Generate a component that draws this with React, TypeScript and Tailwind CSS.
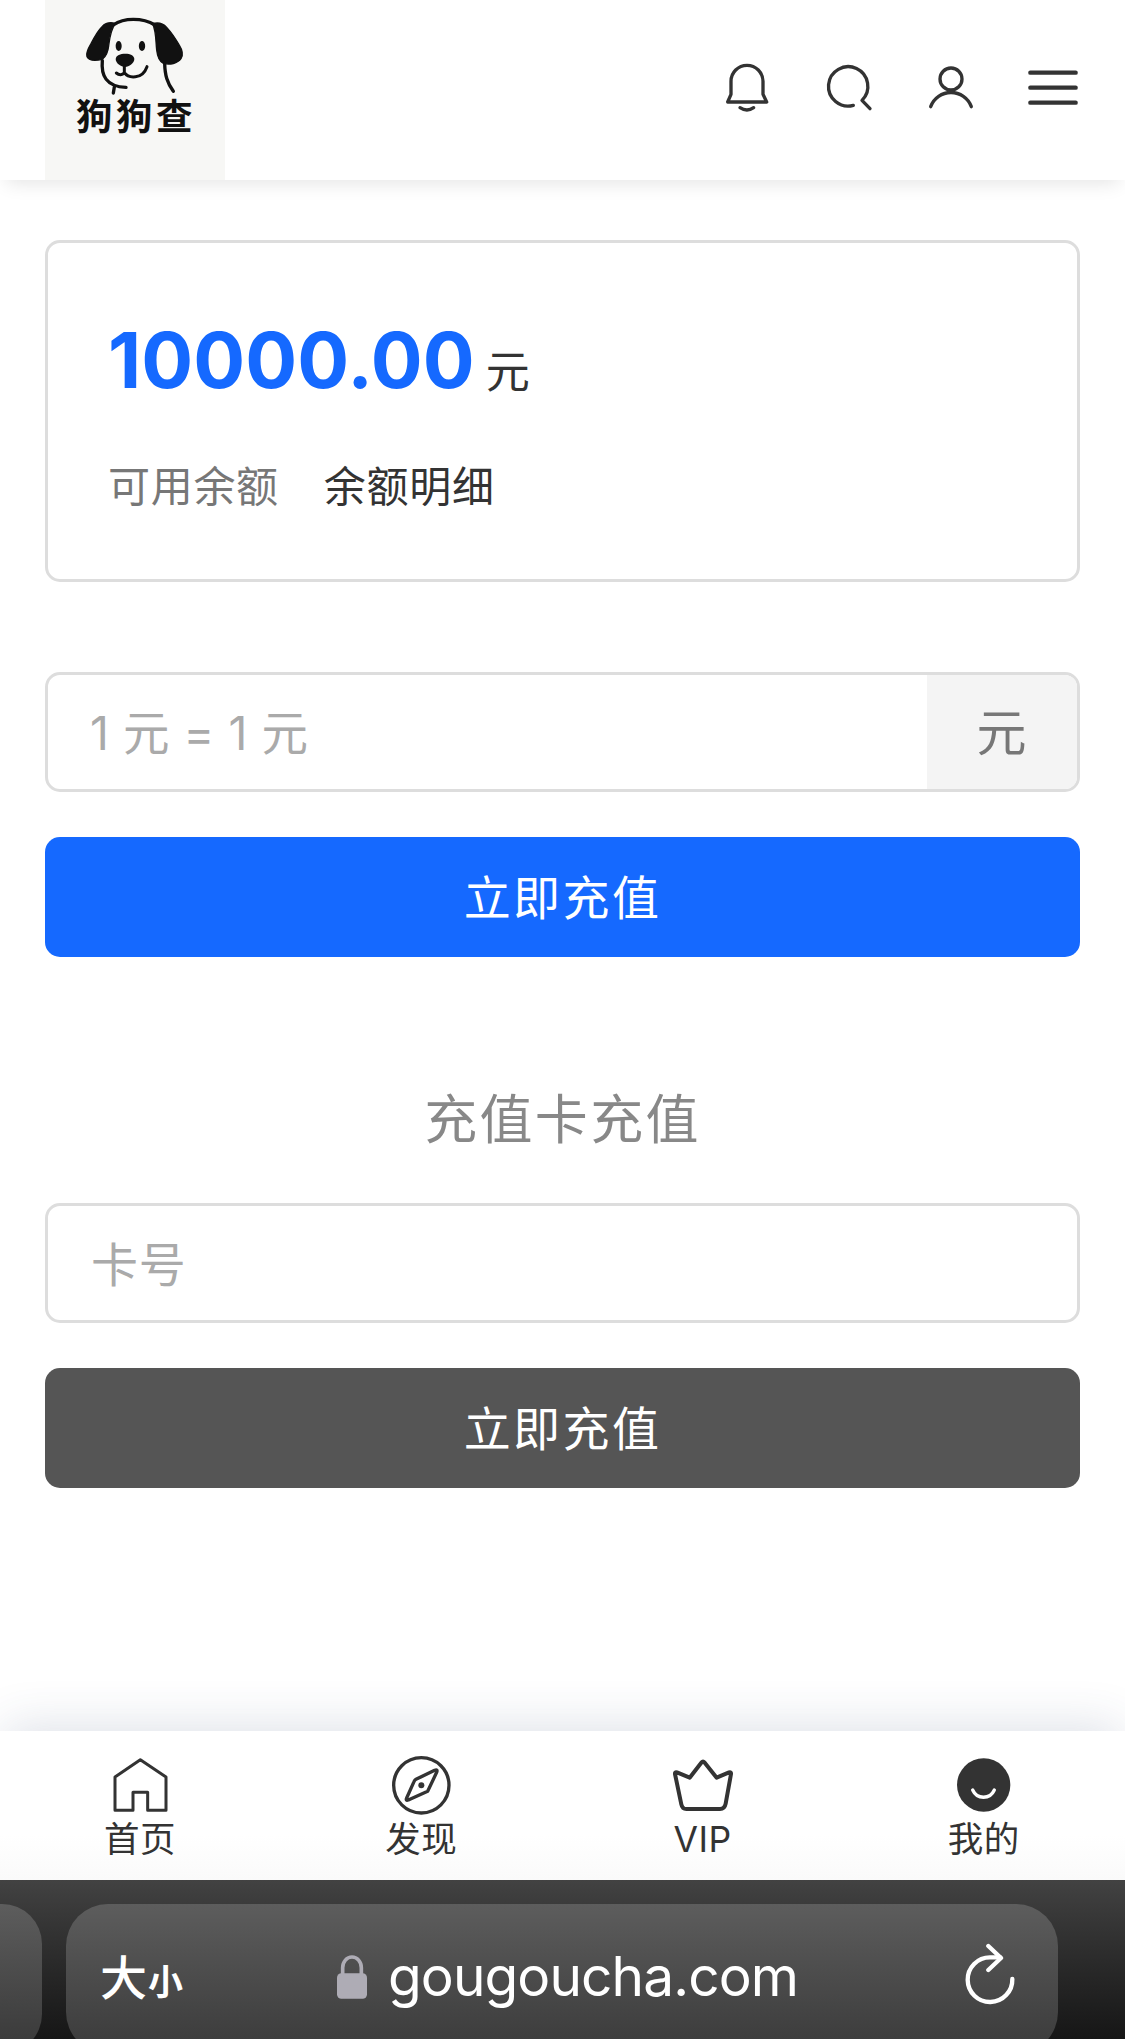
import { useState } from "react";
import type { ReactNode } from "react";

function Icon({ width = 10, children }: { width?: number; children: ReactNode }) {
  return (
    <svg
      viewBox="0 0 180 180"
      className="block h-[60px] w-[60px] overflow-visible"
      fill="none"
      stroke="currentColor"
      strokeWidth={width}
      strokeLinecap="round"
      strokeLinejoin="round"
    >
      {children}
    </svg>
  );
}

function Logo() {
  return (
    <a className="block h-[180px] w-[180px] bg-[#f7f7f5] text-[#111]">
      <svg
        viewBox="0 0 540 288"
        className="block h-24 w-[180px]"
        fill="none"
        stroke="currentColor"
        strokeWidth="10"
        strokeLinecap="round"
        strokeLinejoin="round"
      >
        <path d="M205 75C222 63 240 58 265 58S312 64 330 75" />
        <path
          d="M211 70C196 66 182 68 171 80C158 93 148 111 138 131C128 148 122 160 126 170C132 182 150 183 172 178C184 169 189 156 191 138C194 114 196 91 211 70Z"
          fill="currentColor"
          strokeWidth="4"
        />
        <path
          d="M323 71C342 66 354 70 365 82C378 96 391 115 402 134C412 150 416 164 408 176C398 190 374 196 355 190C342 184 337 168 335 150C332 124 334 96 323 71Z"
          fill="currentColor"
          strokeWidth="4"
        />
        <ellipse cx="221" cy="138" rx="9" ry="15" fill="currentColor" stroke="none" />
        <ellipse cx="291" cy="138" rx="9.5" ry="15" fill="currentColor" stroke="none" />
        <path
          d="M212 177C213 165 226 161 241 161S267 166 268 177C268 189 252 201 240 201S212 190 212 177Z"
          fill="currentColor"
          stroke="none"
        />
        <path d="M238 198V218M214 219C222 226 232 226 238 218C250 235 292 240 306 200" strokeWidth="9" />
        <path d="M172 182C168 225 182 260 243 262M208 261L205 279M359 190C360 226 366 247 385 274" />
      </svg>
      <div className="-mt-[4px] flex justify-center pl-[2px] font-['Noto_Sans_CJK_SC',sans-serif] text-[36.5px] font-bold leading-[46px] tracking-[3.5px]">
        狗狗查
      </div>
    </a>
  );
}

const tabs = [
  {
    label: "首页",
    icon: (
      <Icon width={9}>
        <path d="M88 14L12 66V166H66V112H110V166H165V66Z" />
      </Icon>
    ),
  },
  {
    label: "发现",
    icon: (
      <Icon>
        <circle cx="88" cy="91" r="83" />
        <path d="M72 73L128 46Q138 42 134 52L107 109L49 135Q40 138 44 129L66 80Q68 75 72 73Z" />
        <circle cx="88" cy="91" r="9" fill="currentColor" stroke="none" />
      </Icon>
    ),
  },
  {
    label: "VIP",
    icon: (
      <Icon width={12}>
        <path d="M12 52L50 68L86 22Q90 17 94 22L131 68L168 52Q175 50 174 57L158 146Q155 162 141 162H40Q28 162 25 148L6 57Q5 50 12 52Z" />
      </Icon>
    ),
  },
  {
    label: "我的",
    icon: (
      <Icon>
        <circle cx="89" cy="90" r="80" fill="currentColor" stroke="none" />
        <path d="M56 105C69 134 108 134 121 105" stroke="#fff" />
      </Icon>
    ),
  },
];

export default function App() {
  const [amount, setAmount] = useState("");
  const [card, setCard] = useState("");

  return (
    <div className="flex h-[2039px] w-[1125px] flex-col overflow-hidden bg-white font-['Inter','Noto_Sans_CJK_SC',sans-serif] text-[#333]">
      <header className="flex h-[180px] shrink-0 items-center justify-between bg-white pl-[45px] pr-[42px] shadow-[0_9px_18px_-6px_rgba(0,0,0,0.11)]">
        <Logo />
        <div className="flex gap-[42px]">
          <Icon>
            <path d="M32 126L42 103V64A48 48 0 0 1 138 64V103L149 126Z" />
            <path d="M69 143Q90 157 110 143" />
          </Icon>
          <Icon>
            <path d="M103 136A59 59 0 1 1 129 121L153 146" />
          </Icon>
          <Icon>
            <circle cx="90" cy="57" r="33" />
            <path d="M29 140A65 65 0 0 1 151 140" />
          </Icon>
          <Icon width={13}>
            <path d="M22 38H158M22 83H158M22 128H158" />
          </Icon>
        </div>
      </header>

      <main className="flex h-[1551px] shrink-0 flex-col px-[45px] pt-[60px]">
        <section className="h-[342px] rounded-[15px] border-[3px] border-[#ddd] px-[60px] pt-[67px]">
          <div className="flex h-[100px] items-baseline">
            <span className="text-[77px] font-bold leading-[100px] tracking-[0.1px] text-[#1569ff]">
              10000.00
            </span>
            <span className="ml-[11px] text-[44px]">元</span>
          </div>
          <div className="mt-[47px] flex gap-[45px] text-[42px] leading-[60px] tracking-[0.7px]">
            <span className="text-[#777]">可用余额</span>
            <a>余额明细</a>
          </div>
        </section>

        <div className="mt-[90px] flex h-[120px] overflow-hidden rounded-[15px] border-[3px] border-[#ddd]">
          <input
            value={amount}
            onChange={(e) => setAmount(e.target.value)}
            placeholder="1 元 = 1 元"
            className="min-w-0 flex-1 px-[42px] pt-[4px] text-[46.5px] tracking-[0.5px] outline-none placeholder:text-[#aaa]"
          />
          <span className="flex w-[150px] items-center justify-center bg-[#f4f4f4] pr-px pt-[3px] text-[50px] text-[#777]">
            元
          </span>
        </div>
        <button className="mt-[45px] h-[120px] rounded-[15px] bg-[#1569ff] pt-[2px] text-[47px] tracking-[2.4px] text-white">
          立即充值
        </button>

        <h2 className="mt-[127px] h-[71px] text-center text-[53px] leading-[72px] tracking-[2.3px] text-[#888]">
          充值卡充值
        </h2>
        <input
          value={card}
          onChange={(e) => setCard(e.target.value)}
          placeholder="卡号"
          className="mt-[48px] h-[120px] rounded-[15px] border-[3px] border-[#ddd] px-[43px] pt-[2px] text-[47px] tracking-[0.7px] outline-none placeholder:text-[#aaa]"
        />
        <button className="mt-[45px] h-[120px] rounded-[15px] bg-[#555] pt-[2px] text-[47px] tracking-[2.4px] text-white">
          立即充值
        </button>
      </main>

      <nav className="grid h-[149px] shrink-0 grid-cols-4 bg-linear-to-b from-white from-70% to-[#fafafa] shadow-[0_-10px_45px_-5px_rgba(50,70,110,0.16)]">
        {tabs.map((tab) => (
          <a key={tab.label} className="flex flex-col items-center pt-6">
            {tab.icon}
            <span className="mt-[3px] pr-px text-[35.5px] leading-[44px] tracking-[0.5px]">{tab.label}</span>
          </a>
        ))}
      </nav>

      {/* browser address bar */}
      <footer className="flex h-[159px] shrink-0 items-start gap-6 overflow-hidden bg-linear-to-b from-[#424242] to-[#161616] pt-6 text-white">
        <div className="h-[150px] w-[42px] shrink-0 rounded-r-[40px] bg-linear-to-b from-[#5d5d5d] to-[#383838]" />
        <div className="flex h-[150px] w-[992px] shrink-0 items-center rounded-[42px] bg-linear-to-b from-[#5d5d5d] to-[#3a3a3a] pb-[10px] pl-[34px] pr-[43px]">
          <div className="mt-[3px] flex w-[237px] items-baseline whitespace-nowrap font-['Noto_Sans_CJK_SC',sans-serif]">
            <span className="text-[47px] font-medium">大</span>
            <span className="ml-[1px] text-[35px] font-bold">小</span>
          </div>
          <svg viewBox="0 0 90 132" className="mt-[5px] block h-[44px] w-[30px]">
            <path d="M17 62V38a28 32 0 0 1 56 0V62" fill="none" stroke="#aeacb5" strokeWidth="11" />
            <rect y="55" width="90" height="76" rx="13" fill="#aeacb5" />
          </svg>
          <span className="ml-[21px] mt-[3px] text-[55px] leading-[72px] tracking-[-0.9px]">gougoucha.com</span>
          <svg
            viewBox="0 0 150 186"
            className="ml-auto block h-[62px] w-[50px]"
            fill="none"
            stroke="currentColor"
            strokeWidth="13"
            strokeLinecap="round"
            strokeLinejoin="round"
          >
            <path d="M142 108A67 67 0 1 1 75 43H106" />
            <path d="M70 9L108 45L70 81" />
          </svg>
        </div>
      </footer>
    </div>
  );
}
